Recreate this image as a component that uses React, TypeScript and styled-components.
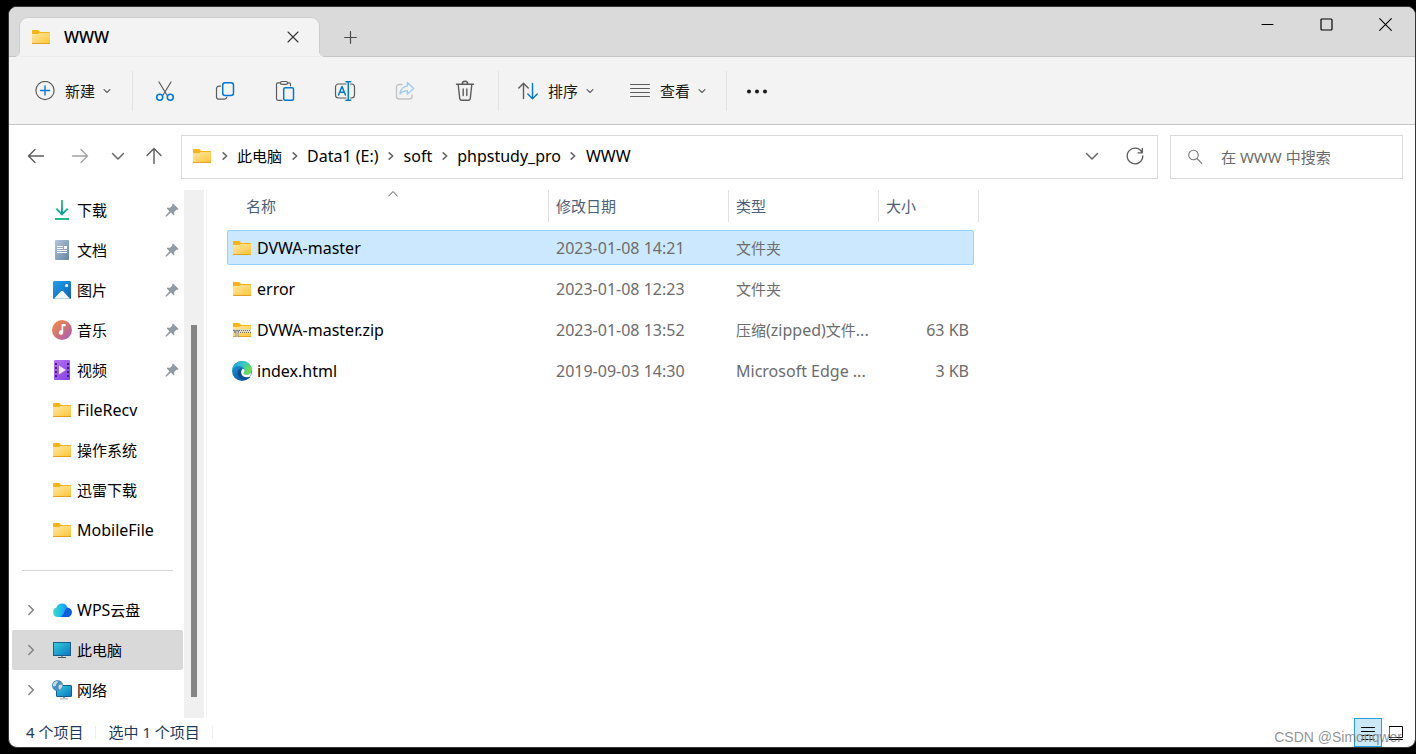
import React from 'react';
import styled, { createGlobalStyle, css } from 'styled-components';

const GlobalStyle = createGlobalStyle`
  * { box-sizing: border-box; }
  body {
    margin: 0;
    background: #000;
    color: #000;
    font: 15px/20px "Noto Sans", "Noto Sans CJK SC", sans-serif;
  }
  button, input, table { font: inherit; color: inherit; }
  button {
    display: inline-flex;
    align-items: center;
    justify-content: center;
    margin: 0;
    padding: 0;
    border: 0;
    background: none;
  }
  a { color: inherit; text-decoration: none; }
  svg { display: block; flex: none; }
`;

/* ---------- window ---------- */

const Page = styled.div`
  min-height: 100vh;
  padding: 6px 0 6px 8px;
  display: flex;
`;

const Window = styled.div`
  position: relative;
  flex: 1;
  min-width: 0;
  display: flex;
  flex-direction: column;
  background: #fff;
  border: 1px solid #363636;
  border-radius: 9px;
  overflow: hidden;
`;

const TitleBar = styled.header`
  display: flex;
  align-items: flex-start;
  height: 50px;
  padding-left: 10px;
  background: #dadada;
  box-shadow: inset 0 -1px #c6c6c6;
`;

const Tab = styled.div`
  position: relative;
  display: flex;
  align-items: center;
  width: 301px;
  height: 40px;
  margin-top: 10px;
  padding: 0 11px;
  background: #f3f3f3;
  border: 1px solid #cdcdcd;
  border-bottom-color: #ededed;
  border-radius: 9px 9px 0 0;
  font-size: 16px;
  font-weight: 500;

  &::before,
  &::after {
    content: '';
    position: absolute;
    bottom: -1px;
    width: 4px;
    height: 4px;
  }
  &::before {
    left: -4px;
    background: radial-gradient(circle at 0 0, #dadada 3px, #f3f3f3 4px);
  }
  &::after {
    right: -4px;
    background: radial-gradient(circle at 100% 0, #dadada 3px, #f3f3f3 4px);
  }
`;

const TabTitle = styled.span`
  flex: 1;
  padding-left: 13px;
`;

const TabButton = styled.button`
  width: 30px;
  height: 30px;
`;

const NewTab = styled.button`
  width: 40px;
  height: 40px;
  margin: 11px 0 0 11px;
`;

const Captions = styled.div`
  display: flex;
  margin-left: auto;
`;

const CaptionButton = styled.button`
  width: 59px;
  height: 36px;
`;

/* ---------- command bar ---------- */

const CommandBar = styled.div`
  display: flex;
  align-items: center;
  height: 68px;
  padding-left: 26px;
  background: #f3f3f3;
  border-bottom: 1px solid #c6c6c6;
`;

const Command = styled.button`
  height: 40px;
  gap: 10px;
  color: #1a1a1a;
`;

const Caption = styled.span`
  display: inline-flex;
  align-items: center;
  gap: 8px;
`;

const IconCommand = styled.button`
  width: 60px;
  height: 40px;
`;

const Rule = styled.span<{ $before?: number; $after?: number }>`
  width: 1px;
  height: 40px;
  margin-left: ${(p) => p.$before ?? 0}px;
  margin-right: ${(p) => p.$after ?? 0}px;
  background: #e2e2e2;
`;

const CommandGroup = styled.div`
  display: flex;
  gap: 36px;
`;

/* ---------- address row ---------- */

const AddressRow = styled.div`
  display: flex;
  align-items: flex-start;
  height: 65px;
  padding: 10px 12px 0 5px;
`;

const NavButton = styled.button<{ $w: number }>`
  width: ${(p) => p.$w}px;
  height: 44px;
  padding-bottom: 2px;
`;

const field = css`
  display: flex;
  align-items: center;
  height: 44px;
  border: 1px solid #d9d9d9;
  background: #fff;
`;

const AddressBox = styled.nav`
  ${field}
  flex: 1;
  min-width: 0;
  margin-left: 7px;
  padding-left: 10px;
`;

const Crumbs = styled.ol`
  display: flex;
  flex: 1;
  min-width: 0;
  margin: 0;
  padding: 0 0 2px;
  list-style: none;
`;

const Crumb = styled.li`
  display: flex;
  align-items: center;
  white-space: nowrap;
`;

const CrumbGap = styled.span`
  display: flex;
  justify-content: center;
  width: 25px;
`;

const SearchBox = styled.label`
  ${field}
  width: 233px;
  margin-left: 12px;
  padding-left: 16px;
  gap: 18px;
`;

const SearchInput = styled.input`
  flex: 1;
  min-width: 0;
  padding: 0;
  border: 0;
  outline: 0;
  background: none;
  &::placeholder { color: #6b6b6b; opacity: 1; }
`;

/* ---------- body ---------- */

const Body = styled.div`
  display: flex;
  flex: 1;
`;

const Sidebar = styled.nav`
  width: 175px;
  padding: 0 1px 0 3px;
`;

const SideLink = styled.a<{ $active?: boolean }>`
  display: flex;
  align-items: center;
  height: 40px;
  padding-right: 4px;
  border-radius: 2px;
  white-space: nowrap;
  background: ${(p) => (p.$active ? '#d9d9d9' : 'transparent')};
`;

const Expander = styled.span`
  display: flex;
  justify-content: center;
  width: 38px;
  margin-right: 2px;
`;

const SideLabel = styled.span`
  flex: 1;
  padding-left: 5px;
`;

const SideRule = styled.hr`
  height: 1px;
  margin: 20px 10px 19px 10px;
  border: 0;
  background: #d5d5d5;
`;

const Track = styled.div`
  display: flex;
  flex-direction: column;
  align-items: center;
  width: 20px;
  background: #f0f0f0;
  &::before { content: ''; flex: 135; }
  &::after { content: ''; flex: 21; }
`;

const Thumb = styled.div`
  flex: 372;
  width: 6px;
  background: #858585;
`;

const Main = styled.main`
  flex: 1;
  min-width: 0;
  margin-left: 2px;
  padding-left: 20px;
  border-left: 1px solid #f3f3f3;
`;

const FileTable = styled.table`
  display: block;
  border-spacing: 0;

  thead,
  tbody { display: block; }
`;

const columns = css`
  display: grid;
  grid-template-columns: 322px 180px 150px 1fr;
`;

const HeadRow = styled.tr`
  ${columns}
  width: 752px;
  height: 32px;
  margin-bottom: 8px;
`;

const HeadCell = styled.th<{ $first?: boolean }>`
  position: relative;
  padding: 6px 0 6px ${(p) => (p.$first ? 19 : 7)}px;
  border-right: 1px solid #e2e2e2;
  color: #4c607a;
  font-weight: 400;
  text-align: left;
`;

const SortMark = styled.span`
  position: absolute;
  top: 0;
  left: 161px;
`;

const FileRow = styled.tr<{ $selected?: boolean }>`
  ${columns}
  align-items: center;
  width: 747px;
  height: 35px;
  margin-bottom: 6px;
  border: 1px solid ${(p) => (p.$selected ? '#99d1ff' : 'transparent')};
  border-radius: 2px;
  background: ${(p) => (p.$selected ? '#cce8ff' : 'transparent')};
`;

const NameCell = styled.td`
  display: flex;
  align-items: center;
  gap: 5px;
  padding: 0 0 0 4px;
`;

const Cell = styled.td<{ $end?: boolean }>`
  padding: 0 ${(p) => (p.$end ? 4 : 6)}px;
  color: #6d6d6d;
  text-align: ${(p) => (p.$end ? 'right' : 'left')};
  white-space: nowrap;
`;

const StatusBar = styled.footer`
  display: flex;
  align-items: center;
  height: 29px;
  padding: 0 5px 0 17px;
  color: #1e395b;
`;

const StatusText = styled.span`
  padding-bottom: 2px;
`;

const StatusRule = styled.span`
  width: 1px;
  height: 13px;
  margin: 0 12px;
  background: #ededed;
`;

const Views = styled.div`
  display: flex;
  margin-left: auto;
`;

const ViewButton = styled.button<{ $on?: boolean }>`
  width: 28px;
  height: 29px;
  ${(p) => p.$on && 'border: 1px solid #26a0da; background: #cce8f6;'}
`;

const Watermark = styled.span`
  position: absolute;
  right: 13px;
  bottom: 0;
  color: rgba(110, 110, 110, 0.75);
  font-family: "Liberation Sans", sans-serif;
  font-size: 14px;
  pointer-events: none;
`;

const Latin = styled.span`
  font-size: 16px;
`;

/* Latin runs are set one pixel larger than the Chinese characters around them. */
const Text = ({ children }: { children: string }) => (
  <>
    {children.split(/([\x20-\x7e]+)/).map((part, i) =>
      i % 2 ? <Latin key={i}>{part}</Latin> : part,
    )}
  </>
);

/* ---------- icons ---------- */

type IconProps = { size?: number; color?: string; width?: number; children: React.ReactNode };

const Line = ({ size = 20, color = '#5c5c5c', width = 1.2, children }: IconProps) => (
  <svg width={size} height={size} viewBox={`0 0 ${size} ${size}`} fill="none" stroke={color}
    strokeWidth={width} strokeLinecap="round" strokeLinejoin="round" aria-hidden="true">
    {children}
  </svg>
);

const BLUE = '#0078d4';

const SmallDown = () => <Line size={8} color="#666" width={1.1}><path d="M1 2.5 4 5.500 7 2.500" /></Line>;
const BigDown = () => <Line width={1.5} color="#666"><path d="M4.5 7.5 10 13l5.5-5.5" /></Line>;
const CrumbArrow = () => <Line size={10} width={1.6} color="#666"><path d="M3.2 1.8 6.7 5 3.2 8.2" /></Line>;
const Expand = () => <Line size={12} width={1.6} color="#858585"><path d="M3.8 1.5 8.3 6l-4.5 4.5" /></Line>;

const Folder = ({ zip }: { zip?: boolean }) => (
  <svg width="20" height="20" viewBox="0 0 20 20" aria-hidden="true">
    <defs>
      <linearGradient id="folder" x1="0" y1="0" x2="1" y2="1">
        <stop offset="0" stopColor="#ffe8a3" />
        <stop offset="1" stopColor="#fdc638" />
      </linearGradient>
    </defs>
    <path d="M1 3.6Q1 3 1.6 3H7q.5 0 .9.5L9 5h9.300q.7 0 .7.7V9H1z" fill="#f6b31a" />
    <path d="M1 7h6.300l1.400-1H19v10H1z" fill="url(#folder)" />
    <path d="M1 16h18v.4q0 .6-.6.6H1.600Q1 17 1 16.400z" fill="#e3a125" />
    {zip && (
      <>
        <path d="M1 9h18v4H1z" fill="#e4dcc0" />
        <path d="M1 10.500h18M2 12.500h17" stroke="#77705c" strokeWidth="1" strokeDasharray="1 1" />
        <path d="M2 10h5v3H6.500v4h-3v-4H2z" fill="#909090" />
        <path d="M4.500 11h1v6h-1z" fill="#e8e8e8" />
      </>
    )}
  </svg>
);

const Edge = () => (
  <svg width="20" height="20" viewBox="0 0 20 20" aria-hidden="true">
    <defs>
      <linearGradient id="edgeTop" x1="0" y1="0" x2="1" y2=".4">
        <stop offset="0" stopColor="#1a9be0" />
        <stop offset=".5" stopColor="#2fc3d3" />
        <stop offset="1" stopColor="#6ae04c" />
      </linearGradient>
      <linearGradient id="edgeLow" x1="0" y1="0" x2=".6" y2="1">
        <stop offset="0" stopColor="#1b9de2" />
        <stop offset="1" stopColor="#0c59a4" />
      </linearGradient>
    </defs>
    <circle cx="10" cy="10" r="10" fill="url(#edgeLow)" />
    <path d="M.1 9C.6 3.800 4.900 0 10 0c5.700 0 10 4.200 10 8.600 0 3-2.300 5.100-5.200 5.100-2.600 0-3.800-1.100-3.200-1.900.4-.5.9-1.100.9-2.200C12.500 7 9.600 5 6.400 5 3.600 5 1.200 6.700.1 9z" fill="url(#edgeTop)" />
    <path d="M7.200 8.200c-1.500 1.300-2 3.100-1.500 5 .8 3.400 4 5.600 7.400 5.400 1.900-.1 4-1.100 5.300-2.900-3.900 1.500-8.600.2-9.100-3.700C9 10 9.800 8.800 10.700 8 9.500 7.200 8.200 7.300 7.200 8.200z" fill="#0b4f93" />
    <path d="M10.500 7.900c1.300-.3 2 .6 2 1.700 0 1.100-.5 1.700-.9 2.200-.6.800.6 1.900 3.200 1.900 1.700 0 3.200-.7 4.200-1.900-.1 1.500-.3 2.600-.9 3.800-3.400 1.700-8.400.6-8.900-3.600-.2-1.600.3-3.200 1.300-4.100z" fill="#fff" />
  </svg>
);

const Pin = () => (
  <svg width="14" height="14" viewBox="0 0 14 14" fill="#8f9ba6" aria-hidden="true">
    <path d="M8.300.8 13.200 5.500c.4.500.1 1-.4 1.100l-1.600.3-2 2.200.1 2.600c0 .6-.6.8-1 .4L5.900 9.600 1.600 13.400.6 13.400.7 12.400 4.500 8.200 2 5.700c-.4-.4-.2-1 .4-1l2.700.1 2-2 .2-1.600c.1-.6.6-.8 1-.4z" />
  </svg>
);

const Download = () => (
  <svg width="20" height="20" viewBox="0 0 20 20" fill="none" aria-hidden="true">
    <defs>
      <linearGradient id="down" x1="0" y1="0" x2="0" y2="1">
        <stop offset="0" stopColor="#3cc98c" />
        <stop offset="1" stopColor="#0a9a9a" />
      </linearGradient>
    </defs>
    <path d="M9 0h2v12l4-4 1.300 1.300L10 15.700 3.700 9.300 5 8l4 4z" fill="url(#down)" />
    <path d="M3 18h14v2H3z" fill="#27bd8b" />
  </svg>
);

const Doc = () => (
  <svg width="20" height="20" viewBox="0 0 20 20" aria-hidden="true">
    <defs>
      <linearGradient id="doc" x1="0" y1="0" x2="1" y2="1">
        <stop offset="0" stopColor="#b3c7da" />
        <stop offset="1" stopColor="#6685a3" />
      </linearGradient>
    </defs>
    <rect x="3" width="14" height="20" rx="1" fill="url(#doc)" />
    <path d="M5 6h6v1H5zM5 8h6v1H5zM12 6h3v3h-3zM5 10h10v1H5zM5 12h10v1H5z" fill="#fff" />
  </svg>
);

const Picture = () => (
  <svg width="20" height="20" viewBox="0 0 20 20" aria-hidden="true">
    <defs>
      <linearGradient id="pic" x1="0" y1="0" x2="1" y2="1">
        <stop offset="0" stopColor="#22a1ea" />
        <stop offset="1" stopColor="#0c5fb8" />
      </linearGradient>
    </defs>
    <rect x="1" y="1" width="18" height="18" rx="1.200" fill="url(#pic)" />
    <path d="M2 18.800 8.900 11.300q1.100-1 2.200 0L18 18.800z" fill="#f3f9ff" />
    <circle cx="14.600" cy="5.400" r="1.500" fill="#fff" />
  </svg>
);

const Music = () => (
  <svg width="20" height="20" viewBox="0 0 20 20" aria-hidden="true">
    <defs>
      <linearGradient id="music" x1=".1" y1=".1" x2=".9" y2=".9">
        <stop offset="0" stopColor="#f08a4b" />
        <stop offset=".55" stopColor="#cf6f78" />
        <stop offset="1" stopColor="#a95fb8" />
      </linearGradient>
    </defs>
    <circle cx="10" cy="10" r="10" fill="url(#music)" />
    <path d="M9.600 4h4v2.300h-2.400v6.300a2.200 2.200 0 1 1-1.600-2.100z" fill="#fff" />
  </svg>
);

const Video = () => (
  <svg width="20" height="20" viewBox="0 0 20 20" aria-hidden="true">
    <defs>
      <linearGradient id="video" x1="0" y1="0" x2="1" y2="1">
        <stop offset="0" stopColor="#b673f4" />
        <stop offset="1" stopColor="#8440e4" />
      </linearGradient>
    </defs>
    <rect x="2" width="16" height="20" rx="1" fill="url(#video)" />
    <path d="M4 3v15M16 3v15" stroke="#43207e" strokeWidth="2" strokeDasharray="2 2" />
    <path d="M7 5.500 13.800 10 7 14.500z" fill="#f2eafc" />
  </svg>
);

const Cloud = () => (
  <svg width="20" height="20" viewBox="0 0 20 20" aria-hidden="true">
    <defs>
      <linearGradient id="cloud" x1="0" y1="0" x2="1" y2="0">
        <stop offset="0" stopColor="#35dfc0" />
        <stop offset=".5" stopColor="#1eb4f4" />
        <stop offset="1" stopColor="#1479f2" />
      </linearGradient>
    </defs>
    <path d="M5.500 17A4.900 4.900 0 0 1 4.500 7.500 5.700 5.700 0 0 1 15.400 7.500 4.850 4.850 0 0 1 14.500 17z" fill="url(#cloud)" />
    <path d="M8 17c2.500-1 3.500-3 4.500-5.500C13.300 9.200 14.300 7.700 16 7.700a4.700 4.700 0 0 1-1.500 9.300z" fill="#0e5fe0" />
  </svg>
);

const screenFill = (
  <defs>
    <linearGradient id="screen" x1="0" y1="0" x2="1" y2="1">
      <stop offset="0" stopColor="#35cfd8" />
      <stop offset="1" stopColor="#0b74c4" />
    </linearGradient>
  </defs>
);

const Computer = () => (
  <svg width="20" height="20" viewBox="0 0 20 20" aria-hidden="true">
    {screenFill}
    <rect x="1.500" y="2.500" width="17" height="13" fill="url(#screen)" stroke="#155e8e" />
    <path d="M9 16h2v1H9z" fill="#8b98a5" />
    <path d="M6 17h8v1H6z" fill="#4a5460" />
  </svg>
);

const Network = () => (
  <svg width="20" height="20" viewBox="0 0 20 20" aria-hidden="true">
    {screenFill}
    <rect x="4.500" y="5.500" width="15" height="11" rx=".5" fill="url(#screen)" stroke="#155e8e" />
    <path d="M11 17h2v1.500h-2z" fill="#8b98a5" />
    <path d="M8 18.500h8v1H8z" fill="#a7b0ba" />
    <circle cx="5.500" cy="5.500" r="5.500" fill="#4c8fb8" />
    <path d="M2 2.500C3.500 1 5 1 6 1.500c0 1.500-2 2-2 3.500S2 6.500 1 6C.8 4.500 1.200 3.300 2 2.500zM7 5c1.500-1 3-.5 3.500.5C10 7.500 9 9 7.500 9.800 6.500 8.500 6 6.500 7 5z" fill="#c3dcea" />
  </svg>
);

/* ---------- data ---------- */

const pinned = [
  { label: '下载', icon: <Download /> },
  { label: '文档', icon: <Doc /> },
  { label: '图片', icon: <Picture /> },
  { label: '音乐', icon: <Music /> },
  { label: '视频', icon: <Video /> },
];
const folders = ['FileRecv', '操作系统', '迅雷下载', 'MobileFile'];
const places = [
  { label: 'WPS云盘', icon: <Cloud /> },
  { label: '此电脑', icon: <Computer />, active: true },
  { label: '网络', icon: <Network /> },
];
const crumbs = ['此电脑', 'Data1 (E:)', 'soft', 'phpstudy_pro', 'WWW'];
const files = [
  { name: 'DVWA-master', date: '2023-01-08 14:21', type: '文件夹', size: '', icon: <Folder />, selected: true },
  { name: 'error', date: '2023-01-08 12:23', type: '文件夹', size: '', icon: <Folder /> },
  { name: 'DVWA-master.zip', date: '2023-01-08 13:52', type: '压缩(zipped)文件...', size: '63 KB', icon: <Folder zip /> },
  { name: 'index.html', date: '2019-09-03 14:30', type: 'Microsoft Edge ...', size: '3 KB', icon: <Edge /> },
];

const tools = [
  {
    label: '剪切',
    icon: (
      <Line size={22}>
        <path d="M5 2l7.900 13M17 2 9.100 15" />
        <g stroke={BLUE} strokeWidth="1.500"><circle cx="5.700" cy="17.200" r="3" /><circle cx="16.300" cy="17.200" r="3" /></g>
      </Line>
    ),
  },
  {
    label: '复制',
    icon: (
      <Line size={22}>
        <path d="M6.500 6.200H5A2.500 2.500 0 0 0 2.500 8.700v8A2.500 2.500 0 0 0 5 19.200h5.500a2.500 2.500 0 0 0 2.400-2" />
        <rect x="8.700" y="2.700" width="10.800" height="12.800" rx="2.500" stroke={BLUE} strokeWidth="1.500" />
      </Line>
    ),
  },
  {
    label: '粘贴',
    icon: (
      <Line size={22}>
        <path d="M6.500 2.800H4A1.500 1.500 0 0 0 2.500 4.300v14.500A1.500 1.500 0 0 0 4 20.300h4M13.500 2.800H15a1.500 1.500 0 0 1 1.500 1.500v1.500" />
        <rect x="6.500" y="1.500" width="7" height="2.800" rx="1.400" />
        <rect x="9.700" y="7.700" width="9.800" height="12.600" rx="1.500" stroke={BLUE} strokeWidth="1.500" />
      </Line>
    ),
  },
  {
    label: '重命名',
    icon: (
      <Line size={22}>
        <path d="M12 4H4.500A3 3 0 0 0 1.500 7v8a3 3 0 0 0 3 3H12M16.500 4h1a3 3 0 0 1 3 3v8a3 3 0 0 1-3 3h-1" />
        <g stroke={BLUE} strokeWidth="1.500"><path d="M4.500 15 8 6.500l3.500 8.500M5.700 12.300h4.600" /><path d="M14.300 1.700v18.600M12 1.700h4.600M12 20.300h4.600" /></g>
      </Line>
    ),
  },
  {
    label: '共享',
    icon: (
      <Line size={22} color="#c4c4c4" width={1.4}>
        <path d="M8 4.500H5A2.500 2.500 0 0 0 2.500 7v9.500A2.500 2.500 0 0 0 5 19h10.500a2.500 2.500 0 0 0 2.500-2.500V15" />
        <path d="M13.300 2.500 19.700 8.500l-6.400 5.800v-3.600c-3.300 0-5.500 1-7.300 3.300.4-4.500 3-7.500 7.300-7.900z" stroke="#a3cdf0" />
      </Line>
    ),
  },
  {
    label: '删除',
    icon: (
      <Line size={22} width={1.4}>
        <path d="M2.500 4.200h17M4.200 4.500l1.500 13.800a2 2 0 0 0 2 1.900h6.600a2 2 0 0 0 2-1.900l1.500-13.800M8.300 4a2.700 2.700 0 0 1 5.400 0M9.200 9v6.500M12.800 9v6.500" />
      </Line>
    ),
  },
];

export default function App() {
  return (
    <Page>
      <GlobalStyle />
      <Window>
        <TitleBar>
          <Tab>
            <Folder />
            <TabTitle>WWW</TabTitle>
            <TabButton aria-label="关闭标签页">
              <Line size={12} color="#333" width={1.1}><path d="M1 1l10 10M11 1 1 11" /></Line>
            </TabButton>
          </Tab>
          <NewTab aria-label="新标签页">
            <Line size={14} color="#4a4a4a" width={1.2}><path d="M6.500.7v11.600M.7 6.500h11.600" /></Line>
          </NewTab>
          <Captions>
            <CaptionButton aria-label="最小化">
              <Line size={14} color="#000" width={1}><path d="M1 6.500h11" /></Line>
            </CaptionButton>
            <CaptionButton aria-label="最大化">
              <Line size={14} color="#000" width={1.2}><rect x="1" y="1" width="11" height="11" rx="1" /></Line>
            </CaptionButton>
            <CaptionButton aria-label="关闭">
              <Line size={14} color="#000" width={1.1}><path d="M.7.7l11.600 11.600M12.300.7.7 12.300" /></Line>
            </CaptionButton>
          </Captions>
        </TitleBar>

        <CommandBar>
          <Command>
            <Line><circle cx="10" cy="9.500" r="9.100" /><path d="M10 5v9M5.500 9.500h9" stroke={BLUE} strokeWidth="1.400" /></Line>
            <Caption>新建<SmallDown /></Caption>
          </Command>
          <Rule $before={21} $after={2} />
          {tools.map((t) => <IconCommand key={t.label} aria-label={t.label}>{t.icon}</IconCommand>)}
          <Rule $before={3} $after={19} />
          <CommandGroup>
            <Command>
              <Line width={1.400}>
                <path d="M5.500 17.500v-15M.8 7l4.700-4.700L10.200 7" />
                <path d="M14.500 2.500v15M9.800 13l4.700 4.700 4.700-4.700" stroke={BLUE} />
              </Line>
              <Caption>排序<SmallDown /></Caption>
            </Command>
            <Command>
              <Line width={1.200}><path d="M.6 3.500h18.800M.6 7.500h18.800M.6 11.500h18.800M.6 15.500h18.800" /></Line>
              <Caption>查看<SmallDown /></Caption>
            </Command>
          </CommandGroup>
          <Rule $before={20} $after={19} />
          <Command aria-label="查看更多">
            <svg width="22" height="20" viewBox="0 0 22 20" fill="#1a1a1a" aria-hidden="true">
              <circle cx="3" cy="10.500" r="2" /><circle cx="11" cy="10.500" r="2" /><circle cx="19" cy="10.500" r="2" />
            </svg>
          </Command>
        </CommandBar>

        <AddressRow>
          <NavButton $w={44} aria-label="后退">
            <Line width={1.400}><path d="M17.500 10h-15M9 3.500 2.500 10 9 16.500" /></Line>
          </NavButton>
          <NavButton $w={44} aria-label="前进">
            <Line width={1.400} color="#a3a3a3"><path d="M2.500 10h15M11 3.500l6.500 6.500-6.500 6.500" /></Line>
          </NavButton>
          <NavButton $w={32} aria-label="最近浏览的位置"><BigDown /></NavButton>
          <NavButton $w={40} aria-label="向上">
            <Line width={1.400}><path d="M10 17.500v-15M3 9.500l7-7 7 7" /></Line>
          </NavButton>
          <AddressBox aria-label="地址">
            <Crumbs>
              <Crumb><Folder /></Crumb>
              {crumbs.map((c) => (
                <Crumb key={c}>
                  <CrumbGap><CrumbArrow /></CrumbGap>
                  <a href="#"><Text>{c}</Text></a>
                </Crumb>
              ))}
            </Crumbs>
            <NavButton $w={43} aria-label="以前的位置"><BigDown /></NavButton>
            <NavButton $w={44} aria-label="刷新">
              <Line width={1.300}><path d="M17 6.500a7.800 7.800 0 1 0 .8 3.500M17.300 2.500v4.300H13" /></Line>
            </NavButton>
          </AddressBox>
          <SearchBox>
            <Line size={16} color="#777" width={1.100}><circle cx="6.500" cy="6" r="4.800" /><path d="M10 9.500l4.800 4.800" /></Line>
            <SearchInput type="search" aria-label="搜索" placeholder="在 WWW 中搜索" />
          </SearchBox>
        </AddressRow>

        <Body>
          <Sidebar aria-label="导航窗格">
            {pinned.map((p) => (
              <SideLink href="#" key={p.label}>
                <Expander />{p.icon}<SideLabel>{p.label}</SideLabel><Pin />
              </SideLink>
            ))}
            {folders.map((f) => (
              <SideLink href="#" key={f}>
                <Expander /><Folder /><SideLabel><Text>{f}</Text></SideLabel>
              </SideLink>
            ))}
            <SideRule />
            {places.map((p) => (
              <SideLink href="#" key={p.label} $active={p.active}>
                <Expander><Expand /></Expander>{p.icon}<SideLabel><Text>{p.label}</Text></SideLabel>
              </SideLink>
            ))}
          </Sidebar>
          <Track><Thumb /></Track>
          <Main>
            <FileTable>
              <thead>
                <HeadRow>
                  <HeadCell $first>
                    名称
                    <SortMark><Line size={10} width={1} color="#555"><path d="M.7 6 5 1.500 9.300 6" /></Line></SortMark>
                  </HeadCell>
                  <HeadCell>修改日期</HeadCell>
                  <HeadCell>类型</HeadCell>
                  <HeadCell>大小</HeadCell>
                </HeadRow>
              </thead>
              <tbody>
                {files.map((f) => (
                  <FileRow key={f.name} $selected={f.selected}>
                    <NameCell>{f.icon}<Text>{f.name}</Text></NameCell>
                    <Cell><Text>{f.date}</Text></Cell>
                    <Cell><Text>{f.type}</Text></Cell>
                    <Cell $end><Text>{f.size}</Text></Cell>
                  </FileRow>
                ))}
              </tbody>
            </FileTable>
          </Main>
        </Body>

        <StatusBar>
          <StatusText>4 个项目</StatusText>
          <StatusRule />
          <StatusText>选中 1 个项目</StatusText>
          <StatusRule />
          <Views>
            <ViewButton $on aria-label="详细信息">
              <Line size={14} color="#000" width={1}>
                <path d="M.5 1.500h13M.5 5.500h13" />
                <path d="M.5 9.500h13M.5 13.500h13" strokeLinecap="butt" strokeDasharray="3 1" />
              </Line>
            </ViewButton>
            <ViewButton aria-label="大图标">
              <Line size={14} color="#000" width={1}><path d="M.5.500h13v11H.5zM.5 13.500h13" /></Line>
            </ViewButton>
          </Views>
        </StatusBar>
        <Watermark>CSDN @Simonqwer</Watermark>
      </Window>
    </Page>
  );
}
